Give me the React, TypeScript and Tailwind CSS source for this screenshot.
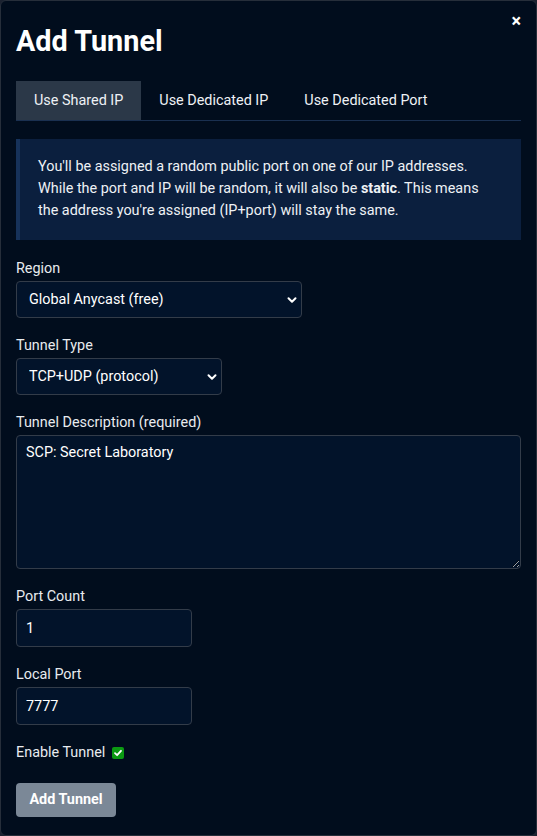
import React from "react";

function Chevron() {
  return (
    <svg width="10" height="10" viewBox="0 0 10 10" className="pointer-events-none absolute right-[5px] top-1/2 -translate-y-1/2">
      <path d="M1.5 3.2 L5 6.7 L8.5 3.2" fill="none" stroke="#ffffff" strokeWidth="2" strokeLinecap="round" strokeLinejoin="round" />
    </svg>
  );
}

function Field({ label, children }: { label: string; children: React.ReactNode }) {
  return (
    <div className="mb-[18px]">
      <div className="text-[14.4px] leading-[20px] mb-[2px] text-[#e8ebef]">{label}</div>
      {children}
    </div>
  );
}

export default function App() {
  return (
    <div className="w-[537px] h-[836px] bg-[#1b2230]" style={{ fontFamily: "Roboto, 'Liberation Sans', sans-serif" }}>
      <div className="relative w-full h-full bg-[#010d1d] rounded-[6px] border border-[#262e3a] px-[15px] pt-[23px] text-white">
        <button className="absolute right-[15px] top-[11px] text-white text-[18px] font-bold leading-none">×</button>
        <h1 className="text-[28.8px] font-bold leading-[34px] mb-[23px]">Add Tunnel</h1>

        <div className="flex border-b border-[#1a3050] text-[14.4px]">
          <div className="px-[18px] h-[39px] flex items-center bg-[#2b3848] text-[#eef1f5]">Use Shared IP</div>
          <div className="px-[18px] h-[39px] flex items-center text-[#eef1f5]">Use Dedicated IP</div>
          <div className="px-[18px] h-[39px] flex items-center text-[#eef1f5]">Use Dedicated Port</div>
        </div>

        <div className="mt-[18px] bg-[#0b1f3e] border-l-[4px] border-[#16325a] pl-[18px] pr-[24px] pt-[17px] pb-[18px] text-[14.4px] leading-[22px] text-[#eef1f5]">
          You'll be assigned a random public port on one of our IP addresses. While the port and IP will be random, it will also be <b className="font-bold">static</b>. This means the address you're assigned (IP+port) will stay the same.
        </div>

        <div className="mt-[19px]">
          <Field label="Region">
            <div className="relative w-[286px]">
              <select className="appearance-none block w-full h-[37px] bg-[#02132a] border border-[#333c49] rounded-[4px] pl-[12px] text-[14.4px] text-white outline-none">
                <option>Global Anycast (free)</option>
              </select>
              <Chevron />
            </div>
          </Field>

          <Field label="Tunnel Type">
            <div className="relative w-[206px]">
              <select className="appearance-none block w-full h-[37px] bg-[#02132a] border border-[#333c49] rounded-[4px] pl-[12px] text-[14.4px] text-white outline-none">
                <option>TCP+UDP (protocol)</option>
              </select>
              <Chevron />
            </div>
          </Field>

          <Field label="Tunnel Description (required)">
            <textarea
              defaultValue="SCP: Secret Laboratory"
              className="block w-full h-[134px] bg-[#02132a] border border-[#333c49] rounded-[4px] px-[9px] py-[7px] text-[14.4px] leading-[20px] text-white outline-none"
            />
          </Field>

          <Field label="Port Count">
            <input
              defaultValue="1"
              className="block w-[176px] h-[38px] bg-[#02132a] border border-[#333c49] rounded-[4px] px-[9px] text-[14.4px] text-white outline-none"
            />
          </Field>

          <Field label="Local Port">
            <input
              defaultValue="7777"
              className="block w-[176px] h-[38px] bg-[#02132a] border border-[#333c49] rounded-[4px] px-[9px] text-[14.4px] text-white outline-none"
            />
          </Field>

          <div className="flex items-center gap-[7px] text-[14.4px] leading-[20px] text-[#e8ebef]">
            <span>Enable Tunnel</span>
            <span className="w-[12px] h-[12px] rounded-[2px] bg-[#0b9a12] flex items-center justify-center">
              <svg width="10" height="10" viewBox="0 0 10 10">
                <path d="M2 5.2 L4.1 7.2 L8 2.8" fill="none" stroke="#ffffff" strokeWidth="1.8" strokeLinecap="round" strokeLinejoin="round" />
              </svg>
            </span>
          </div>

          <button className="block mt-[20px] w-[100px] h-[34px] rounded-[4px] bg-[#7b8897] text-white text-[14.4px] font-bold">Add Tunnel</button>
        </div>
      </div>
    </div>
  );
}
